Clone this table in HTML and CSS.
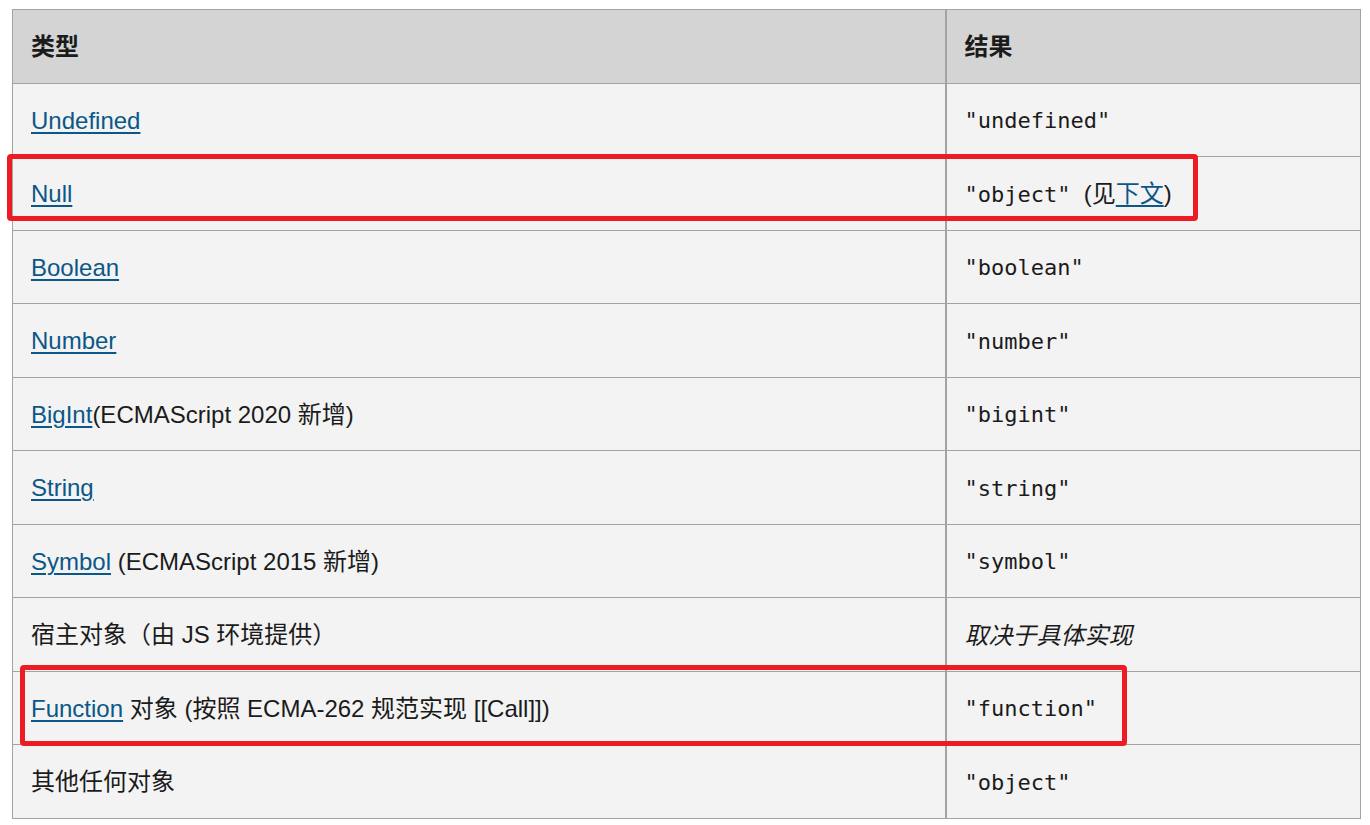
FILE: index.html
```html
<!DOCTYPE html>
<html lang="zh-CN">
<head>
<meta charset="utf-8">
<title>typeof 结果</title>
<link rel="stylesheet" href="styles.css">
</head>
<body>
<div class="wrap">
  <table class="types">
    <thead>
      <tr><th class="c1">类型</th><th class="c2">结果</th></tr>
    </thead>
    <tbody>
      <tr><td class="c1"><a href="#">Undefined</a></td><td class="c2"><code>"undefined"</code></td></tr>
      <tr><td class="c1"><a href="#">Null</a></td><td class="c2"><code>"object" </code>(见<a href="#">下文</a>)</td></tr>
      <tr><td class="c1"><a href="#">Boolean</a></td><td class="c2"><code>"boolean"</code></td></tr>
      <tr><td class="c1"><a href="#">Number</a></td><td class="c2"><code>"number"</code></td></tr>
      <tr><td class="c1"><a href="#">BigInt</a>(ECMAScript 2020 新增)</td><td class="c2"><code>"bigint"</code></td></tr>
      <tr><td class="c1"><a href="#">String</a></td><td class="c2"><code>"string"</code></td></tr>
      <tr><td class="c1"><a href="#">Symbol</a> (ECMAScript 2015 新增)</td><td class="c2"><code>"symbol"</code></td></tr>
      <tr><td class="c1">宿主对象（由 JS 环境提供）</td><td class="c2"><em>取决于具体实现</em></td></tr>
      <tr><td class="c1"><a href="#">Function</a> 对象 (按照 ECMA-262 规范实现 [[Call]])</td><td class="c2"><code>"function"</code></td></tr>
      <tr><td class="c1">其他任何对象</td><td class="c2"><code>"object"</code></td></tr>
    </tbody>
  </table>
  <div class="mark mark-null"></div>
  <div class="mark mark-func"></div>
</div>
</body>
</html>
```

FILE: styles.css
```css
html, body {
  margin: 0;
  padding: 0;
  background: #ffffff;
}

body {
  font-family: "Liberation Sans", Arial, "Noto Sans CJK SC", sans-serif;
  font-size: 24px;
  color: #1b1b1b;
}

.wrap {
  position: relative;
  padding: 9px 0 0 12px;
}

.types {
  border-collapse: collapse;
  width: 1349px;
  background: #f3f3f3;
  border: 1px solid #a3a3a3;
  table-layout: fixed;
}

.types th,
.types td {
  height: 73.5px;
  padding: 2px 18px 0;
  text-align: left;
  vertical-align: middle;
  border-top: 1px solid #a3a3a3;
  border-bottom: 1px solid #a3a3a3;
  box-sizing: border-box;
  line-height: 30px;
}

.types thead th {
  background: #d4d4d4;
  font-weight: 700;
  font-size: 24px;
}

.types .c1 {
  width: 933px;
}

.types .c2 {
  border-left: 2px solid #a3a3a3;
  padding-left: 18px;
}

.types a {
  color: #0b5788;
  text-decoration: underline;
  text-decoration-thickness: 2px;
  text-underline-offset: 3px;
}

.types code {
  font-family: "DejaVu Sans Mono", "Liberation Mono", monospace;
  font-size: 22px;
  color: #1b1b1b;
  white-space: pre;
}

.types em {
  font-style: italic;
  font-family: "Noto Sans CJK SC", sans-serif;
}

.mark {
  position: absolute;
  border: 5px solid #ed1c24;
  border-radius: 4px;
  box-sizing: border-box;
  pointer-events: none;
}

.mark-null {
  left: 7px;
  top: 154px;
  width: 1191px;
  height: 67px;
}

.mark-func {
  left: 20px;
  top: 665px;
  width: 1107px;
  height: 81px;
}
```
